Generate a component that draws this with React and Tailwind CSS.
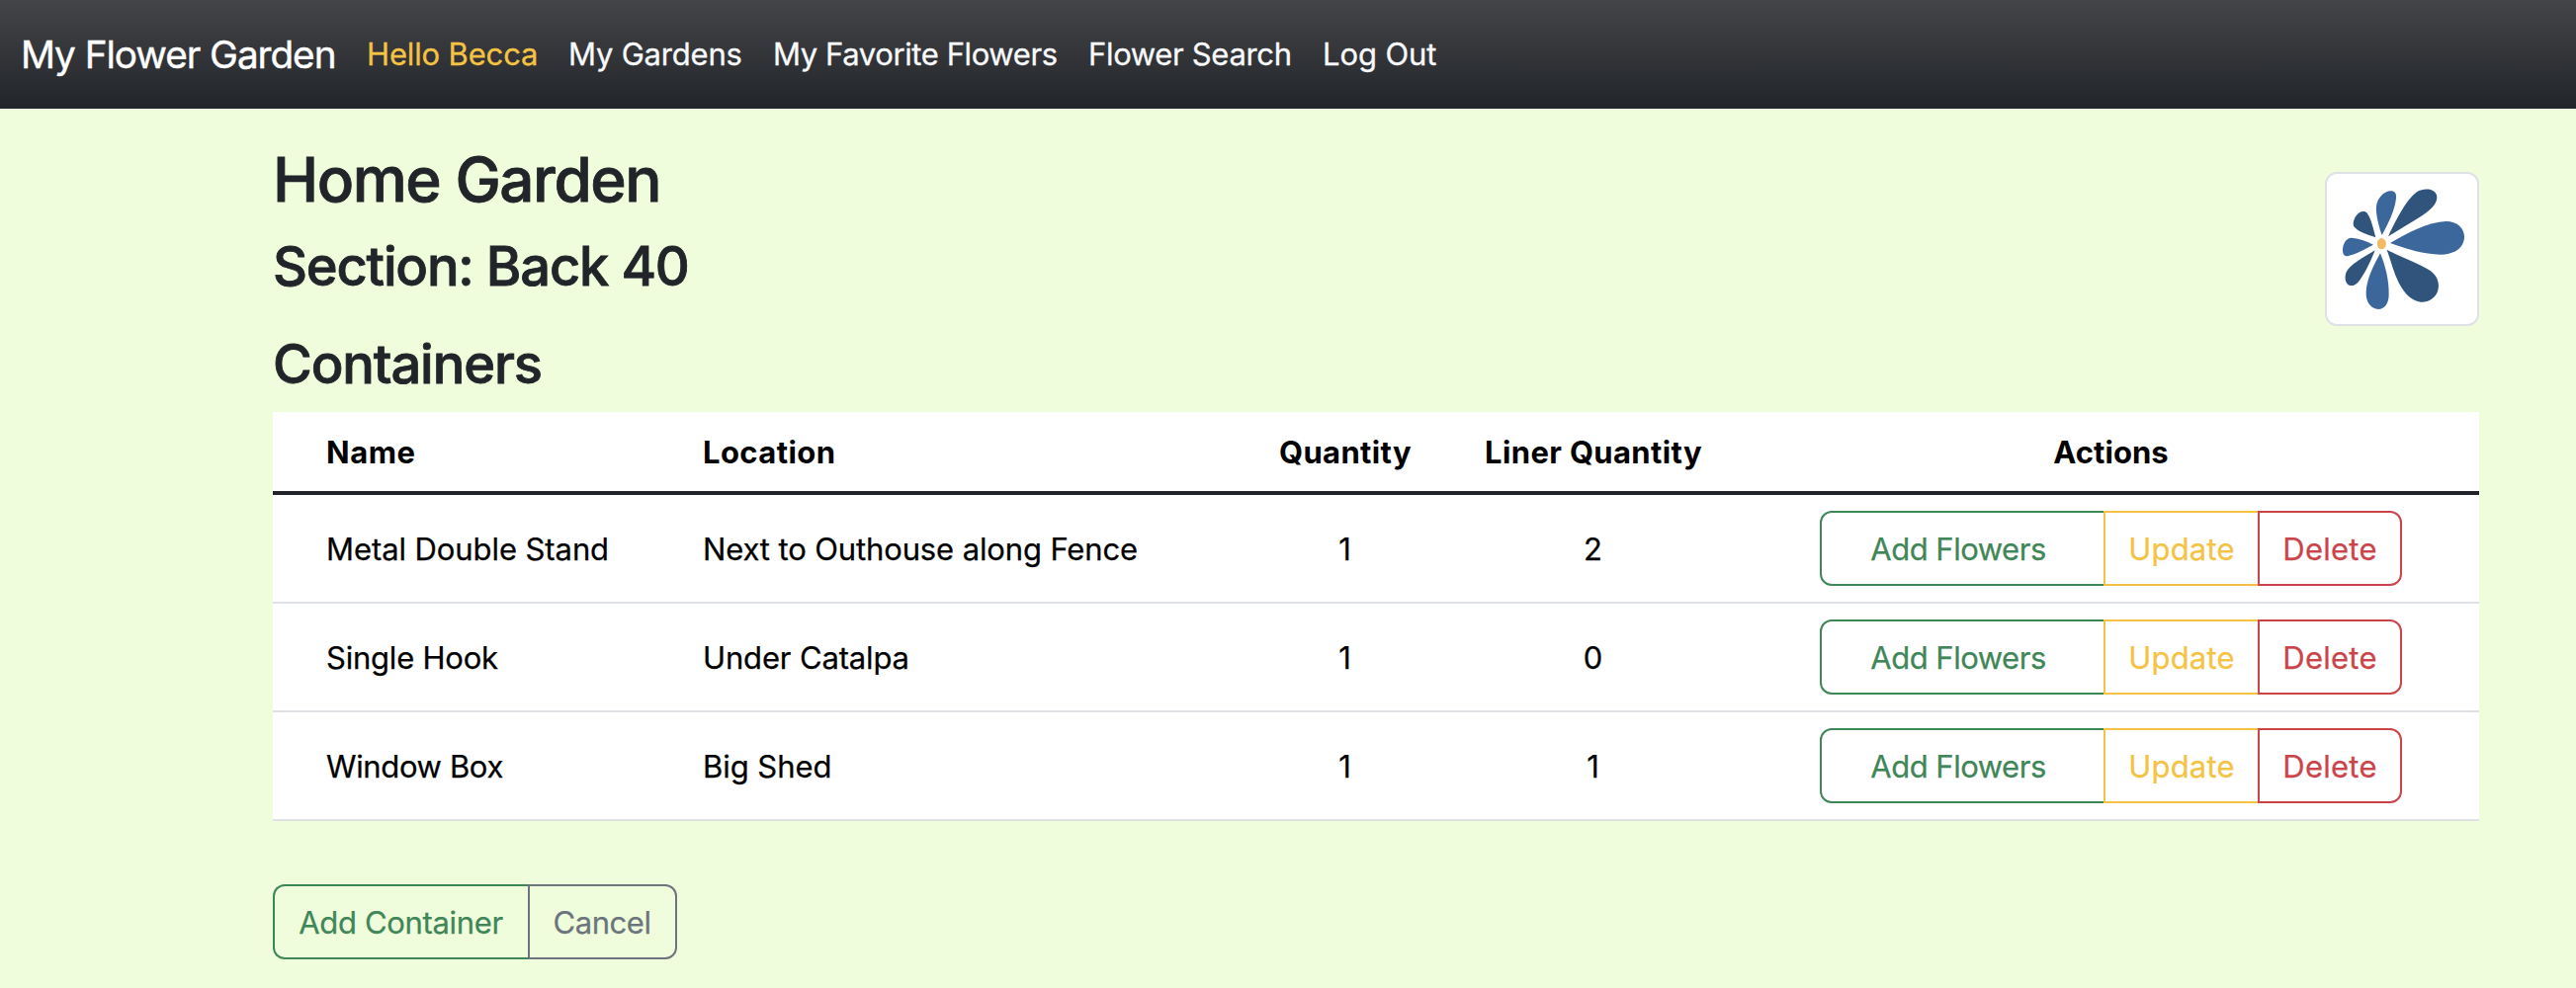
const navLinks = [
  { label: "Hello Becca", className: "w-[204px] tracking-[-0.15px] text-[#f5c344]" },
  { label: "My Gardens", className: "w-[207px] tracking-[-0.2px] text-[#f8f9fa]" },
  { label: "My Favorite Flowers", className: "w-[319px] tracking-[-0.4px] text-[#f8f9fa]" },
  { label: "Flower Search", className: "w-[237px] tracking-[-0.33px] text-[#f8f9fa]" },
  { label: "Log Out", className: "tracking-[-0.1px] text-[#f8f9fa]" },
];

const containers = [
  {
    name: "Metal Double Stand",
    nameClass: "tracking-[-0.08px]",
    location: "Next to Outhouse along Fence",
    locationClass: "tracking-[-0.13px]",
    quantity: 1,
    liners: 2,
  },
  {
    name: "Single Hook",
    nameClass: "tracking-[-0.22px]",
    location: "Under Catalpa",
    locationClass: "tracking-[-0.15px]",
    quantity: 1,
    liners: 0,
  },
  {
    name: "Window Box",
    nameClass: "tracking-[-0.36px]",
    location: "Big Shed",
    locationClass: "tracking-[-0.05px]",
    quantity: 1,
    liners: 1,
  },
];

function Navbar() {
  return (
    <nav className="flex h-[110px] items-center bg-linear-to-b from-[#444549] to-[#222529] pl-[21px] whitespace-nowrap">
      <a className="w-[350px] text-[38.75px] leading-[60px] tracking-[-1.07px] text-white [-webkit-text-stroke:0.4px]">
        My Flower Garden
      </a>
      <div className="flex [-webkit-text-stroke:0.3px]">
        {navLinks.map((link) => (
          <a key={link.label} className={`${link.className} leading-12`}>
            {link.label}
          </a>
        ))}
      </div>
    </nav>
  );
}

function FlowerLogo() {
  return (
    <div className="size-[156px] overflow-hidden rounded-xl border-2 border-[#dee2e6] bg-white">
      <svg viewBox="102 78 456 456" className="size-full">
        <g fill="#3c679c">
          <path d="M269 264C257 228 250 196 252 176C256 150 276 130 296 130C308 130 314 138 312 152C308 188 290 226 269 264Z" />
          <path d="M294 288C344 258 410 224 464 222C496 222 519 242 519 269C519 300 491 323 446 323C396 322 344 306 294 288Z" />
          <path d="M264 319C280 357 291 404 290 444C290 470 278 489 258 489C236 488 220 468 221 438C222 400 242 358 264 319Z" />
          <path d="M243 293C214 309 188 322 165 328C154 329 149 320 150 306C152 286 162 273 176 272C198 273 221 281 243 293Z" />
        </g>
        <g fill="#30547b">
          <path d="M288 268C312 217 342 157 375 133C398 119 428 123 435 142C441 164 421 185 392 204C360 225 322 246 288 268Z" />
          <path d="M284 308C328 332 384 350 417 373C439 390 444 412 439 431C433 454 411 468 387 467C360 464 338 442 321 410C305 379 296 342 284 308Z" />
          <path d="M248 310C234 345 218 379 199 404C188 418 174 421 165 413C156 405 156 388 161 376C174 350 214 332 248 310Z" />
          <path d="M250 271C222 262 196 253 184 238C180 230 183 216 190 206C199 192 215 188 223 196C237 214 243 246 250 271Z" />
        </g>
        <ellipse cx="268" cy="290" rx="13.500" ry="17" fill="#f3b964" />
      </svg>
    </div>
  );
}

function RowActions() {
  return (
    <div className="flex justify-center">
      <button className="h-19 w-[289px] rounded-l-xl border-2 border-[#3f8658] pr-[9px] leading-[74px] tracking-[-0.48px] text-[#3f8658]">
        Add Flowers
      </button>
      <button className="-ml-0.5 h-19 w-[158px] border-2 border-[#f5c344] leading-[74px] tracking-[0.22px] text-[#f5c344]">
        Update
      </button>
      <button className="-ml-0.5 h-19 w-[146px] rounded-r-xl border-2 border-[#cb444a] leading-[74px] tracking-[0.25px] text-[#cb444a]">
        Delete
      </button>
    </div>
  );
}

function ContainersTable() {
  return (
    <table className="w-full table-fixed border-separate border-spacing-0 bg-white text-black">
      <colgroup>
        <col className="w-[418px]" />
        <col className="w-[584px]" />
        <col className="w-[166px]" />
        <col className="w-[336px]" />
        <col />
      </colgroup>
      <thead>
        <tr className="h-[84px] *:border-b-4 *:border-[#212529] *:p-0 *:pt-0.5 *:font-bold *:whitespace-nowrap">
          <th className="text-left tracking-[0.5px]"><span className="pl-[54px]">Name</span></th>
          <th className="text-left tracking-[0.4px]"><span className="pl-[17px]">Location</span></th>
          <th className="tracking-[0.35px]">Quantity</th>
          <th className="tracking-[0.36px]">Liner Quantity</th>
          <th className="tracking-[0.06px]"><span className="pr-[17px]">Actions</span></th>
        </tr>
      </thead>
      <tbody className="[-webkit-text-stroke:0.25px]">
        {containers.map((row) => (
          <tr key={row.name} className="h-[110px] *:border-b-2 *:border-[#dee2e6] *:p-0 *:whitespace-nowrap">
            <td className={row.nameClass}><div className="pt-0.5 pl-[54px]">{row.name}</div></td>
            <td className={row.locationClass}><div className="pt-0.5 pl-[17px]">{row.location}</div></td>
            <td className="text-center"><div className="pt-0.5 pr-px">{row.quantity}</div></td>
            <td className="text-center"><div className="pt-0.5 pr-px">{row.liners}</div></td>
            <td>
              <div className="pr-[17px]">
                <RowActions />
              </div>
            </td>
          </tr>
        ))}
      </tbody>
    </table>
  );
}

export default function App() {
  return (
    <div className="min-h-screen bg-[#f0fddc] font-['Inter',sans-serif] text-[31px] text-[#212529]">
      <Navbar />
      <main className="pr-[98px] pl-[276px]">
        <header className="flex justify-between">
          <div className="pt-[33px] font-medium [-webkit-text-stroke:0.8px]">
            <h1 className="h-[92px] text-[62px] leading-[78px] tracking-[-1.45px]">Home Garden</h1>
            <h2 className="h-[99px] text-[54.25px] leading-[68px] tracking-[-1.2px]">Section: Back 40</h2>
            <h2 className="h-[83px] text-[54.25px] leading-[68px] tracking-[-1.12px]">Containers</h2>
          </div>
          <div className="pt-16">
            <FlowerLogo />
          </div>
        </header>
        <ContainersTable />
        <div className="mt-16 flex [-webkit-text-stroke:0.25px]">
          <button className="h-19 w-[260px] rounded-l-xl border-2 border-r-0 border-[#3f8658] pr-[3px] leading-[74px] tracking-[-0.33px] text-[#3f8658]">
            Add Container
          </button>
          <button className="-ml-0.5 h-19 w-[151px] rounded-r-xl border-2 border-[#6c757d] pr-px leading-[74px] tracking-[-0.43px] text-[#6c757d]">
            Cancel
          </button>
        </div>
      </main>
    </div>
  );
}
